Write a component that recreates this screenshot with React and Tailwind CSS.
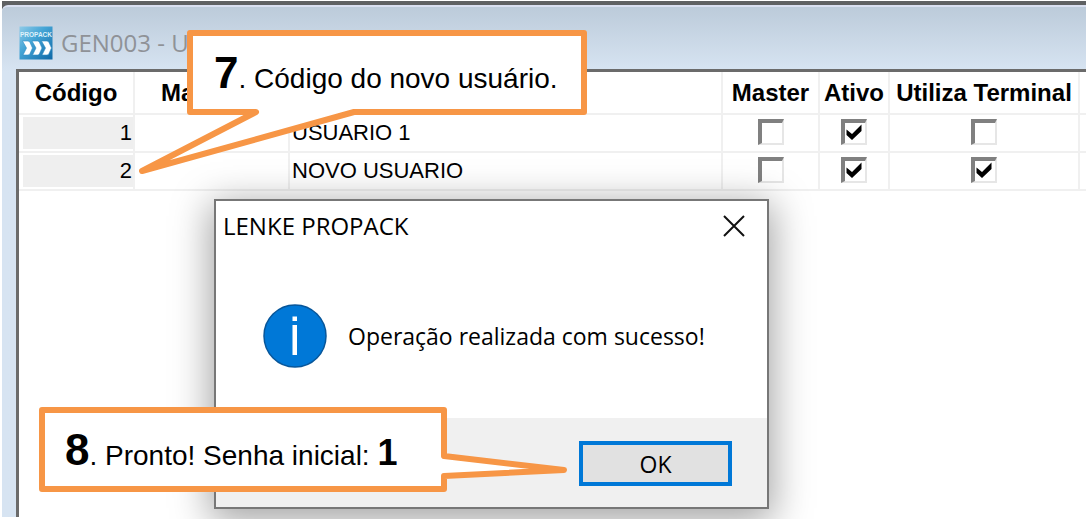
const users = [
    { code: 1, name: "USUARIO 1", master: false, active: true, terminal: false },
    { code: 2, name: "NOVO USUARIO", master: false, active: true, terminal: true },
];

function AppIcon() {
    return (
        <svg viewBox="0 0 34 34" className="w-[34px] h-[34px]" aria-hidden="true">
            <defs>
                <linearGradient id="appIcon" x1="0" y1="0" x2="1" y2="1">
                    <stop offset="0" stopColor="#8fcbe8" />
                    <stop offset="0.4" stopColor="#45a5d6" />
                    <stop offset="1" stopColor="#0f68a6" />
                </linearGradient>
            </defs>
            <rect x="0.5" y="0.5" width="33" height="33" fill="url(#appIcon)" />
            <text
                x="17"
                y="11"
                textAnchor="middle"
                fontFamily="Liberation Sans, sans-serif"
                fontWeight="700"
                fontSize="6.500"
                fill="#dff1fa"
            >
                PROPACK
            </text>
            {[3.5, 13, 22.5].map((x) => (
                <path
                    key={x}
                    transform={`translate(${x} 15)`}
                    d="M0 0H5.500Q7 0 7.500 1.500L10 7L7.500 12.500Q7 14 5.500 14H0.500L4 7Z"
                    fill="#fff"
                    stroke="#2b8cc4"
                    strokeWidth="0.600"
                />
            ))}
        </svg>
    );
}

function CheckCell({ label, checked }) {
    return (
        <td className="border-r-2 border-b-2 border-[#f0f0f0] px-0 pt-0 pb-0.5">
            <div className="relative w-[26px] h-[26px] mx-auto">
                <input
                    type="checkbox"
                    aria-label={label}
                    defaultChecked={checked}
                    className="peer block appearance-none w-[26px] h-[26px] bg-white border-t-4 border-l-4 border-r-2 border-b-2 border-t-[#808080] border-l-[#808080] border-r-[#e6e6e6] border-b-[#e6e6e6]"
                />
                <svg
                    viewBox="0 0 26 26"
                    className="hidden peer-checked:block absolute inset-0 pointer-events-none"
                    aria-hidden="true"
                >
                    <path d="M5.500 10.500L11 15L20.500 5.500V12L11 21L5.500 16Z" fill="#000" />
                </svg>
            </div>
        </td>
    );
}

function UserTable() {
    const th = "border-r-2 border-b-2 border-[#f0f0f0] p-0 whitespace-nowrap";
    const td = "border-r-2 border-b-2 border-[#f0f0f0] p-0";
    return (
        <table className="w-full table-fixed border-separate border-spacing-0 text-[22px] leading-8 text-black">
            <colgroup>
                <col className="w-[116px]" />
                <col className="w-[155px]" />
                <col />
                <col className="w-[97px]" />
                <col className="w-[70px]" />
                <col className="w-[190px]" />
                <col className="w-[6px]" />
            </colgroup>
            <thead>
                <tr className="h-[43px] text-[24px]">
                    <th className={th}>Código</th>
                    <th className={`${th} pl-[26px] text-left`}>Ma</th>
                    <td className={th}></td>
                    <th className={th}>Master</th>
                    <th className={th}>Ativo</th>
                    <th className={th}>Utiliza Terminal</th>
                    <td className="border-b-2 border-[#f0f0f0] p-0"></td>
                </tr>
            </thead>
            <tbody>
                {users.map((user) => (
                    <tr key={user.code} className="h-[38px]">
                        <td className={`${td} pl-1`}>
                            <div className="bg-[#efefef] text-right h-8 pr-px">
                                {user.code}
                            </div>
                        </td>
                        <td className={td}></td>
                        <td className={`${td} pl-0.5`}>{user.name}</td>
                        <CheckCell label="Master" checked={user.master} />
                        <CheckCell label="Ativo" checked={user.active} />
                        <CheckCell label="Utiliza Terminal" checked={user.terminal} />
                        <td className="border-b-2 border-[#f0f0f0] p-0"></td>
                    </tr>
                ))}
            </tbody>
        </table>
    );
}

function MessageDialog() {
    return (
        <div
            role="dialog"
            aria-labelledby="dialog-title"
            className="absolute left-[214px] top-[199px] w-[555px] border-2 border-[#777] bg-white text-black font-['Open_Sans','Noto_Sans',sans-serif] shadow-[0_8px_36px_4px_rgba(0,0,0,0.36)]"
        >
            <div className="flex items-center justify-between h-[50px] pl-[7px] pr-5">
                <h2 id="dialog-title" className="text-[24px] leading-8">
                    LENKE PROPACK
                </h2>
                <button type="button" aria-label="Fechar" className="p-px">
                    <svg viewBox="0 0 24 24" className="w-6 h-6" aria-hidden="true">
                        <path d="M2 2L22 22M22 2L2 22" stroke="#111" strokeWidth="2" />
                    </svg>
                </button>
            </div>
            <div className="flex items-center gap-[21px] h-[167px] pt-0.5 pl-[47px]">
                <svg viewBox="0 0 64 64" className="w-16 h-16" aria-hidden="true">
                    <circle cx="32" cy="32" r="31" fill="#0078d7" stroke="#07569a" strokeWidth="1.500" />
                    <rect x="29.500" y="12.500" width="4.500" height="4.500" fill="#fff" />
                    <rect x="29.500" y="21" width="4.500" height="30" fill="#fff" />
                </svg>
                <p className="text-[23px] leading-8 whitespace-nowrap">
                    Operação realizada com sucesso!
                </p>
            </div>
            <div className="flex justify-end bg-[#f0f0f0] pt-[23px] pb-[21px] pr-[35px]">
                <button
                    type="button"
                    className="w-[153px] h-[45px] border-4 border-[#0078d7] bg-[#e1e1e1] text-[23px] leading-8"
                >
                    OK
                </button>
            </div>
        </div>
    );
}

export default function App() {
    return (
        <main className="relative flex flex-col min-h-screen overflow-hidden bg-white px-0.5 pt-px pb-0.5 font-['Liberation_Sans',Arial,sans-serif] text-black">
            <div className="flex flex-col flex-1 bg-[#5f6163] pt-1">
                <section className="flex flex-col flex-1 rounded-tl-md border-t-2 border-[#d9dff0] bg-[#d7e4f2] bg-linear-to-b from-[#bccbda] to-[#d7e4f2] to-[64px] pl-[14px]">
                    <header className="flex items-center gap-2 h-[62px] pt-[9px] pl-[3px]">
                        <AppIcon />
                        <h1 className="text-[24px] leading-8 text-[#8f9297] font-['Open_Sans','Noto_Sans',sans-serif]">
                            GEN003 - U
                        </h1>
                    </header>
                    <div className="flex-1 border-t-3 border-l-3 border-[#6b6b6b] bg-white">
                        <UserTable />
                    </div>
                </section>
            </div>

            <MessageDialog />

            {/* Step 7 */}
            <div className="absolute left-[136px] top-[30px] w-[451px] h-[146px]">
                <svg viewBox="0 0 451 146" className="absolute inset-0" aria-hidden="true">
                    <path
                        d="M54 3H448V82H218L6 141L120 82H54Z"
                        fill="#fff"
                        stroke="#f79646"
                        strokeWidth="6"
                        strokeLinejoin="round"
                    />
                </svg>
                <p className="relative pl-[78px] pt-[15px] text-[28px] leading-[56px] whitespace-nowrap">
                    <strong className="text-[44px]">7</strong>. Código do novo usuário.
                </p>
            </div>

            {/* Step 8 */}
            <div className="absolute left-[39px] top-[407px] w-[530px] h-[85px]">
                <svg viewBox="0 0 530 85" className="absolute inset-0" aria-hidden="true">
                    <path
                        d="M3 3H405V49L525 63L405 69V82H3Z"
                        fill="#fff"
                        stroke="#f79646"
                        strokeWidth="6"
                        strokeLinejoin="round"
                    />
                </svg>
                <p className="relative pl-[26px] pt-[15px] text-[28px] leading-[56px] whitespace-nowrap">
                    <strong className="text-[44px]">8</strong>. Pronto! Senha inicial:{" "}
                    <strong className="text-[36px]">1</strong>
                </p>
            </div>
        </main>
    );
}
